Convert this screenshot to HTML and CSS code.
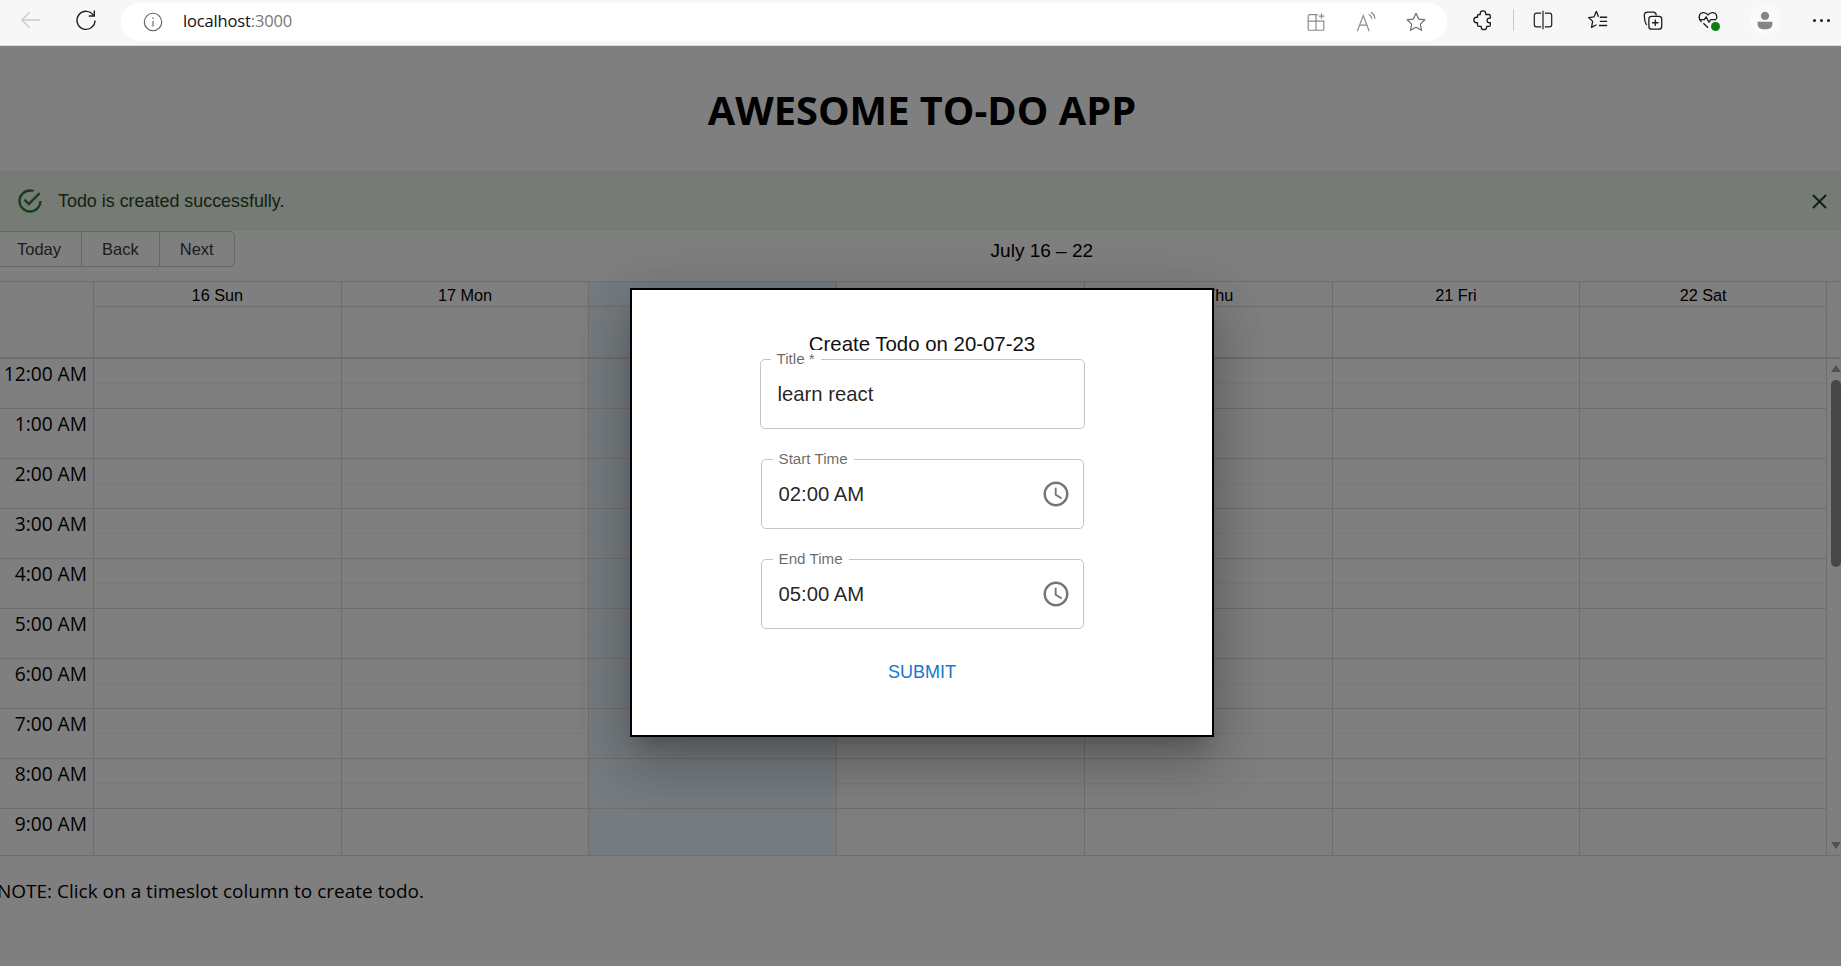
FILE: index.html
```html
<!DOCTYPE html>
<html lang="en">
<head>
<meta charset="UTF-8">
<title>Awesome To-Do App</title>
<link rel="stylesheet" href="styles.css">
</head>
<body>

<!-- browser chrome -->
<header class="chrome">
  <span class="nav-btn">
    <svg class="ico" viewBox="0 0 24 24" fill="none" stroke="#c9c9c9" stroke-width="1.4"><path d="M22 12H2M10.500 3.500L2 12l8.500 8.500"/></svg>
  </span>
  <span class="nav-btn nav-btn--reload">
    <svg class="ico ico--lg" viewBox="0 0 24 24" fill="none" stroke="#1c1c1c" stroke-width="1.4"><path d="M19.600 7.500A9 9 0 1 0 21 12.500"/><path d="M20.300 2.500v5.500h-5.500"/></svg>
  </span>
  <div class="address">
    <svg class="ico" viewBox="0 0 24 24" fill="none" stroke="#5f5f5f" stroke-width="1.2"><circle cx="12" cy="12" r="9.500"/><path d="M12 10.500v6.500M12 7v1.600"/></svg>
    <span class="url">localhost<span class="url-port">:3000</span></span>
    <div class="address-tools">
      <span class="tool">
        <svg class="ico" viewBox="0 0 24 24" fill="none" stroke="#8a8a8a" stroke-width="1.3"><path d="M14 4H5a1.500 1.500 0 0 0-1.500 1.500v14A1.500 1.500 0 0 0 5 21h14a1.500 1.500 0 0 0 1.500-1.500V11H3.500M12 4v17M18 2.500v6M15 5.500h6"/></svg>
      </span>
      <span class="tool">
        <svg class="ico" viewBox="0 0 24 24" fill="none" stroke="#8a8a8a" stroke-width="1.3"><path d="M2.500 22L9 5l6.500 17M5 15.500h8.500M15 3.500c2 1 3 2.500 3.200 5M17.500 1.500c2.700 1.500 4 3.700 4.200 7"/></svg>
      </span>
      <span class="tool">
        <svg class="ico" viewBox="0 0 24 24" fill="none" stroke="#6e6e6e" stroke-width="1.3" stroke-linejoin="round"><path d="M12 2.500l2.900 6.300 6.800.8-5 4.700 1.300 6.800-6-3.400-6 3.400 1.300-6.800-5-4.700 6.800-.8z"/></svg>
      </span>
    </div>
  </div>
  <span class="tool tool--wide tool--first">
    <svg class="ico" viewBox="0 0 24 24" fill="none" stroke="#1c1c1c" stroke-width="1.4" stroke-linejoin="round"><path d="M9 6V5a3 3 0 0 1 6 0v1h3.500A1.500 1.500 0 0 1 20 7.500V10h-1a2.500 2.500 0 0 0 0 5h1v2.500a1.500 1.500 0 0 1-1.500 1.500H16v.5a3 3 0 0 1-6 0V19H7.500A1.500 1.500 0 0 1 6 17.500V15H5a3 3 0 0 1 0-6h1V7.500A1.500 1.500 0 0 1 7.500 6z"/></svg>
  </span>
  <span class="chrome-divider"></span>
  <span class="tool tool--wide">
    <svg class="ico" viewBox="0 0 24 24" fill="none" stroke="#1c1c1c" stroke-width="1.3"><path d="M10 4.500H5A2.500 2.500 0 0 0 2.500 7v10A2.500 2.500 0 0 0 5 19.500h5M14 4.500h5A2.500 2.500 0 0 1 21.500 7v10a2.500 2.500 0 0 1-2.500 2.500h-5M12 2v20"/></svg>
  </span>
  <span class="tool tool--wide">
    <svg class="ico" viewBox="0 0 24 24" fill="none" stroke="#1c1c1c" stroke-width="1.4" stroke-linejoin="round"><path d="M12.500 8.500L10.200 2.500l-2.500 6-6 .8 4.500 4.200-1.300 6.500 5.500-2.800"/><path d="M14 9h8M14 13.500h8M13 18h9"/></svg>
  </span>
  <span class="tool tool--wide">
    <svg class="ico" viewBox="0 0 24 24" fill="none" stroke="#1c1c1c" stroke-width="1.4" stroke-linejoin="round"><path d="M5 17.500C3.500 15 2.500 10 2.500 7A3.500 3.500 0 0 1 6 3.500h6A3.500 3.500 0 0 1 15.500 7"/><rect x="7.500" y="8" width="14" height="14" rx="3"/><path d="M14.500 11.500v7M11 15h7"/></svg>
  </span>
  <span class="tool tool--wide health">
    <svg class="ico" viewBox="0 0 24 24" fill="none" stroke="#1c1c1c" stroke-width="1.4" stroke-linejoin="round"><path d="M5 14C2.500 11.500 2 9.500 2.500 7.500 3.500 3.500 9 2.500 12 6.500c3-4 8.500-3 9.500 1 .3 1.400.1 2.500-.5 3.500"/><path d="M2.500 11.500H8l2-3 3 6 2-3h6M7 15.500l5 5"/></svg>
    <span class="health-badge"></span>
  </span>
  <span class="tool tool--wide avatar-slot">
    <span class="avatar">
      <svg viewBox="0 0 24 24" fill="#858585" width="22" height="22"><circle cx="12" cy="7.500" r="4.500"/><path d="M4 14h16v2.500a5.500 5.500 0 0 1-5.500 5.500h-5A5.500 5.500 0 0 1 4 16.500z"/></svg>
    </span>
  </span>
  <span class="tool tool--wide dots-slot"><span class="dots"><i></i><i></i><i></i></span></span>
</header>

<div class="page">
  <h1 class="app-title">AWESOME TO-DO APP</h1>

  <div class="alert">
    <svg class="alert-icon" viewBox="0 0 24 24" fill="#2e7d32"><path d="M20,12A8,8 0 0,1 12,20A8,8 0 0,1 4,12A8,8 0 0,1 12,4C12.76,4 13.5,4.11 14.2,4.31L15.77,2.74C14.61,2.26 13.34,2 12,2A10,10 0 0,0 2,12A10,10 0 0,0 12,22A10,10 0 0,0 22,12M7.91,10.08L6.5,11.5L11,16L21,6L19.59,4.58L11,13.17L7.91,10.08Z"/></svg>
    <span class="alert-text">Todo is created successfully.</span>
    <svg class="alert-close" viewBox="0 0 24 24" fill="#1e4620"><path d="M19 6.410L17.590 5 12 10.590 6.410 5 5 6.410 10.590 12 5 17.590 6.410 19 12 13.410 17.590 19 19 17.590 13.410 12z"/></svg>
  </div>

  <div class="toolbar">
    <div class="btn-group">
      <button class="btn btn--today">Today</button>
      <button class="btn">Back</button>
      <button class="btn">Next</button>
    </div>
    <span class="toolbar-label">July 16 – 22</span>
  </div>

  <!-- calendar -->
  <section class="calendar">
    <div class="cal-head">
      <div class="gutter-head"></div>
      <div class="head-col"><div class="head-day">16 Sun</div></div>
      <div class="head-col"><div class="head-day">17 Mon</div></div>
      <div class="head-col today"><div class="head-day">18 Tue</div></div>
      <div class="head-col"><div class="head-day">19 Wed</div></div>
      <div class="head-col"><div class="head-day">20 Thu</div></div>
      <div class="head-col"><div class="head-day">21 Fri</div></div>
      <div class="head-col"><div class="head-day">22 Sat</div></div>
    </div>
    <div class="cal-body">
      <div class="cal-grid">
        <div class="gutter">
          <div class="time">12:00 AM</div>
          <div class="time">1:00 AM</div>
          <div class="time">2:00 AM</div>
          <div class="time">3:00 AM</div>
          <div class="time">4:00 AM</div>
          <div class="time">5:00 AM</div>
          <div class="time">6:00 AM</div>
          <div class="time">7:00 AM</div>
          <div class="time">8:00 AM</div>
          <div class="time">9:00 AM</div>
        </div>
        <div class="day-col"></div>
        <div class="day-col"></div>
        <div class="day-col today"></div>
        <div class="day-col"></div>
        <div class="day-col"></div>
        <div class="day-col"></div>
        <div class="day-col"></div>
      </div>
      <div class="scroll-lane">
        <span class="arrow arrow--up"></span>
        <span class="thumb"></span>
        <span class="arrow arrow--down"></span>
      </div>
    </div>
  </section>

  <p class="note">NOTE: Click on a timeslot column to create todo.</p>

  <!-- modal over backdrop -->
  <div class="backdrop">
    <div class="modal">
      <h2 class="modal-title">Create Todo on 20-07-23</h2>
      <div class="field field--title">
        <label class="field-label">Title *</label>
        <span class="field-value">learn react</span>
      </div>
      <div class="field">
        <label class="field-label">Start Time</label>
        <span class="field-value">02:00 AM</span>
        <svg class="clock" viewBox="0 0 24 24" fill="currentColor"><path d="M11.990 2C6.470 2 2 6.480 2 12s4.470 10 9.990 10C17.520 22 22 17.520 22 12S17.520 2 11.990 2zM12 20c-4.420 0-8-3.580-8-8s3.580-8 8-8 8 3.580 8 8-3.580 8-8 8zm.5-13H11v6l5.250 3.150.75-1.230-4.500-2.670z"/></svg>
      </div>
      <div class="field">
        <label class="field-label">End Time</label>
        <span class="field-value">05:00 AM</span>
        <svg class="clock" viewBox="0 0 24 24" fill="currentColor"><path d="M11.990 2C6.470 2 2 6.480 2 12s4.470 10 9.990 10C17.520 22 22 17.520 22 12S17.520 2 11.990 2zM12 20c-4.420 0-8-3.580-8-8s3.580-8 8-8 8 3.580 8 8-3.580 8-8 8zm.5-13H11v6l5.250 3.150.75-1.230-4.500-2.670z"/></svg>
      </div>
      <button class="submit">SUBMIT</button>
    </div>
  </div>
</div>

</body>
</html>
```

FILE: styles.css
```css
:root {
  --line: #dddddd;
  --today: #eaf6ff;
  --body-font: "Liberation Sans", Arial, sans-serif;
  --ui-font: "Open Sans", "Noto Sans", sans-serif;
}
* { margin: 0; padding: 0; box-sizing: border-box; }
html, body { height: 966px; overflow: hidden; }
body {
  background: #fff;
  color: #000;
  font-family: var(--body-font);
  display: flex;
  flex-direction: column;
}
button { font: inherit; background: none; border: none; color: inherit; }

/* ---------- browser chrome ---------- */
.chrome {
  height: 46px;
  flex: none;
  background: #f7f7f7;
  border-bottom: 1px solid #dcdcdc;
  display: flex;
  align-items: center;
  padding: 0 0 5px 11px;
}
.ico { width: 22px; height: 22px; display: block; }
.ico--lg { width: 24px; height: 24px; }
.nav-btn { width: 40px; display: flex; justify-content: center; flex: none; }
.nav-btn--reload { margin-left: 15px; }
.address {
  width: 1326px;
  height: 38px;
  margin-top: 4px;
  margin-left: 15px;
  padding: 0 6px 0 21px;
  border-radius: 19px;
  background: #fff;
  display: flex;
  align-items: center;
  flex: none;
}
.url {
  margin-left: 19px;
  margin-top: -3px;
  font-family: var(--ui-font);
  font-size: 16.500px;
  letter-spacing: -0.15px;
  color: #111;
}
.url-port { color: #777; }
.address-tools { margin-left: auto; display: flex; }
.tool { width: 50px; display: flex; justify-content: center; align-items: center; flex: none; }
.tool--wide { width: 55px; }
.tool--first { margin-left: 8px; }
.chrome-divider { width: 1px; height: 22px; background: #c9c9c9; margin: 0 1px 0 3px; flex: none; }
.health { position: relative; }
.health-badge {
  position: absolute;
  width: 9px;
  height: 9px;
  right: 15px;
  bottom: 0;
  background: #107c10;
  border-radius: 50%;
}
.avatar-slot { margin-left: 2px; }
.avatar {
  width: 30px;
  height: 30px;
  border-radius: 50%;
  background: #fbfbfb;
  display: flex;
  align-items: center;
  justify-content: center;
}
.dots-slot { margin-left: 2px; }
.dots { display: flex; gap: 4px; }
.dots i { width: 3px; height: 3px; border-radius: 50%; background: #1c1c1c; }

/* ---------- page ---------- */
.page { position: relative; flex: 1; overflow: hidden; }
.app-title {
  height: 125px;
  padding: 37px 0 0 3px;
  text-align: center;
  font-family: var(--ui-font);
  font-size: 39.800px;
  line-height: 54px;
  font-weight: 700;
}
.alert {
  height: 60px;
  background: #edf7ed;
  color: #1e4620;
  display: flex;
  align-items: center;
  padding: 0 9px 0 16px;
}
.alert-icon { width: 28px; height: 28px; flex: none; }
.alert-text { margin-left: 14px; font-size: 17.900px; }
.alert-close { width: 25px; height: 25px; margin-left: auto; }

.toolbar { display: flex; align-items: center; height: 36px; margin-bottom: 14px; }
.btn-group { display: flex; flex: none; }
.btn {
  height: 36px;
  padding: 0 20px;
  font-size: 16.500px;
  color: #373a3c;
  border: 1px solid #ccc;
  border-left-width: 0;
}
.btn + .btn { border-left-width: 1px; margin-left: -1px; }
.btn:last-child { border-radius: 0 5px 5px 0; padding: 0 20px 0 20px; }
.btn--today { padding-left: 17px; }
.toolbar-label { flex: 1; text-align: center; font-size: 19px; padding-left: 8px; padding-top: 4px; }

/* ---------- calendar ---------- */
.calendar { font-size: 16.250px; }
.cal-head {
  display: grid;
  grid-template-columns: 93px repeat(7, 1fr) 14px;
  height: 78px;
  border-top: 1px solid var(--line);
  border-bottom: 2px solid var(--line);
}
.head-col { border-left: 1px solid var(--line); }
.head-col:nth-child(8) { border-right: 1px solid var(--line); }
.head-day {
  height: 25px;
  line-height: 26px;
  text-align: center;
  border-bottom: 1px solid var(--line);
}
.today { background: var(--today); }

.cal-body {
  display: flex;
  height: 497px;
  border-bottom: 1px solid var(--line);
  overflow: hidden;
}
.cal-grid {
  flex: 1;
  display: grid;
  grid-template-columns: 93px repeat(7, 1fr);
}
.time {
  height: 50px;
  padding: 2px 6px 0 0;
  text-align: right;
  font-family: var(--ui-font);
  font-size: 19.200px;
  line-height: 26px;
  border-bottom: 1px solid var(--line);
}
.day-col {
  height: 500px;
  border-left: 1px solid var(--line);
  background-image:
    linear-gradient(to bottom, transparent 49px, var(--line) 49px),
    linear-gradient(to bottom, transparent 24px, #f4f4f4 24px, #f4f4f4 25px, transparent 25px);
  background-size: 100% 50px, 100% 50px;
}
.day-col:last-child { border-right: 1px solid var(--line); }

.scroll-lane {
  width: 14px;
  flex: none;
  padding: 6px 0 6px 4px;
  display: flex;
  flex-direction: column;
  align-items: flex-start;
}
.arrow { width: 0; height: 0; border-left: 5px solid transparent; border-right: 5px solid transparent; }
.arrow--up { border-bottom: 7px solid #a0a0a0; }
.arrow--down { border-top: 7px solid #a0a0a0; margin-top: auto; }
.thumb { width: 10px; height: 187px; margin-top: 8px; border-radius: 5px; background: #8f8f8f; }

.note {
  margin: 22px 0 0 -3px;
  font-family: var(--ui-font);
  font-size: 19px;
  line-height: 26px;
}

/* ---------- modal ---------- */
.backdrop {
  position: absolute;
  inset: 0;
  background: rgba(0, 0, 0, 0.5);
  display: flex;
  align-items: center;
  justify-content: center;
  padding: 13px 0 0 3px;
}
.modal {
  width: 584px;
  height: 449px;
  background: #fff;
  border: 2px solid #000;
  box-shadow: 0 14px 19px -9px rgba(0,0,0,.2), 0 30px 48px 4px rgba(0,0,0,.14), 0 11px 58px 10px rgba(0,0,0,.12);
  display: flex;
  flex-direction: column;
  align-items: center;
  padding-top: 43px;
}
.modal-title {
  font-size: 20.400px;
  font-weight: 400;
  line-height: 23px;
  margin-bottom: 3px;
  color: #111;
}
.field {
  position: relative;
  width: 323px;
  height: 70px;
  flex: none;
  margin-bottom: 30px;
  padding: 0 15px 0 17px;
  border: 1px solid rgba(0, 0, 0, 0.23);
  border-radius: 5px;
  display: flex;
  align-items: center;
  justify-content: space-between;
}
.field--title { width: 325px; padding-left: 17px; }
.field-label {
  position: absolute;
  top: -10px;
  left: 11px;
  padding: 0 6px;
  background: #fff;
  font-size: 15.200px;
  line-height: 18px;
  color: rgba(0, 0, 0, 0.6);
}
.field--title .field-label { left: 10px; }
.field-value { font-size: 20.300px; color: rgba(0, 0, 0, 0.87); }
.clock { width: 30px; height: 30px; color: rgba(0, 0, 0, 0.54); margin-right: -3px; }
.submit {
  margin-top: -2px;
  font-size: 18px;
  line-height: 30px;
  color: #1976d2;
}
```
